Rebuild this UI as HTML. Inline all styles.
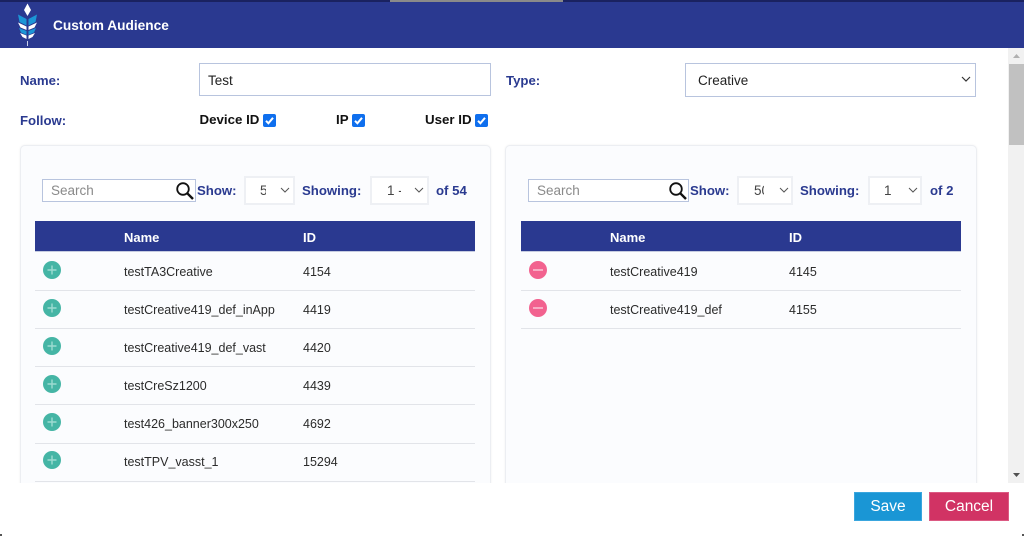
<!DOCTYPE html>
<html>
<head>
<meta charset="utf-8">
<style>
html,body{margin:0;padding:0;width:1024px;height:536px;overflow:hidden;background:#fff;font-family:"Liberation Sans",Arial,sans-serif;font-size:14px;color:#222}
.a{position:absolute;white-space:nowrap}
.lbl{color:#2a3a90;font-weight:bold;font-size:13.2px;line-height:16px}
.blk{color:#111;font-weight:bold;font-size:13.300px;line-height:16px}
.panel{position:absolute;top:145px;width:471px;height:345px;background:#fbfcfe;border:1px solid #eceef2;border-radius:5px;box-sizing:border-box;box-shadow:0 0 2px rgba(0,0,0,.06)}
.box{position:absolute;box-sizing:border-box;background:#fff}
.sel{border:2px solid #eef0f4;background:#fff}
.th{position:absolute;top:221px;height:31px;background:#2a3990;border-bottom:1px solid #c5cbe0;box-sizing:border-box}
.thx{color:#fff;font-weight:bold;font-size:13px;line-height:16px}
.td{font-size:12.5px;line-height:16px;color:#2b2b2b}
.sep{position:absolute;height:1px;background:#e2e4e9}
.ph{color:#8a8a8a;font-size:13.5px;line-height:16px}
</style>
</head>
<body>
<!-- top strip -->
<div class="a" style="left:0;top:0;width:1024px;height:2px;background:#1a2260"></div>
<div class="a" style="left:390px;top:0;width:173px;height:2px;background:#8a8a8a"></div>
<!-- header -->
<div class="a" style="left:0;top:2px;width:1024px;height:46px;background:#2a3990"></div>
<svg class="a" style="left:14px;top:2px" width="28" height="46" viewBox="0 0 28 46">
<polygon points="13.500,1.500 17,8 13.500,14 10,8" fill="#fff"/>
<polygon points="4,12.500 12.500,17 12.500,23.500 5.500,20" fill="#1c96d6"/>
<polygon points="23,12.500 14.500,17 14.500,23.500 21.500,20" fill="#1c96d6"/>
<polygon points="4,20.500 12.500,24.500 12.500,28 6.500,25.500" fill="#fff"/>
<polygon points="23,20.500 14.500,24.500 14.500,28 20.500,25.500" fill="#fff"/>
<polygon points="5,26 12.500,29 12.500,33 7,30.500" fill="#1c96d6"/>
<polygon points="22,26 14.500,29 14.500,33 20,30.500" fill="#1c96d6"/>
<polygon points="6,31 12.500,33.500 12.500,37 8.500,35" fill="#fff"/>
<polygon points="21,31 14.500,33.500 14.500,37 18.500,35" fill="#fff"/>
<rect x="13" y="39" width="1" height="5" fill="#c9d0ea"/>
</svg>
<div class="a" style="left:53px;top:17px;color:#fff;font-weight:bold;font-size:13.700px;line-height:17px">Custom Audience</div>

<!-- form row 1 -->
<div class="a lbl" style="left:20px;top:73px">Name:</div>
<div class="box" style="left:199px;top:63px;width:292px;height:33px;border:1px solid #b8c4de"></div>
<div class="a" style="left:208px;top:73px;font-size:13.500px;line-height:16px;color:#222">Test</div>
<div class="a lbl" style="left:506px;top:73px">Type:</div>
<div class="box" style="left:685px;top:63px;width:291px;height:34px;border:1px solid #b8c4de"></div>
<div class="a" style="left:698px;top:73px;font-size:13.500px;line-height:16px;color:#222">Creative</div>
<svg class="a" style="left:961px;top:76px" width="10" height="7" viewBox="0 0 10 7"><path d="M1 1l4 4 4-4" fill="none" stroke="#333" stroke-width="1.200"/></svg>

<!-- form row 2 -->
<div class="a lbl" style="left:20px;top:113px">Follow:</div>
<div class="a blk" style="left:199.500px;top:112px">Device ID</div>
<div class="a blk" style="left:336px;top:112px">IP</div>
<div class="a blk" style="left:425px;top:112px">User ID</div>
<svg class="a" style="left:263px;top:114px" width="13" height="13" viewBox="0 0 13 13"><rect width="13" height="13" rx="2" fill="#0f6fee"/><path d="M3 6.800l2.400 2.500L10 3.800" fill="none" stroke="#fff" stroke-width="2"/></svg>
<svg class="a" style="left:352px;top:114px" width="13" height="13" viewBox="0 0 13 13"><rect width="13" height="13" rx="2" fill="#0f6fee"/><path d="M3 6.800l2.400 2.500L10 3.800" fill="none" stroke="#fff" stroke-width="2"/></svg>
<svg class="a" style="left:475px;top:114px" width="13" height="13" viewBox="0 0 13 13"><rect width="13" height="13" rx="2" fill="#0f6fee"/><path d="M3 6.800l2.400 2.500L10 3.800" fill="none" stroke="#fff" stroke-width="2"/></svg>

<!-- panels -->
<div class="panel" style="left:20px"></div>
<div class="panel" style="left:505px;width:472px"></div>

<!-- left toolbar -->
<div class="box" style="left:42px;top:179px;width:154px;height:23px;border:1px solid #b8c4de"></div>
<div class="a ph" style="left:51px;top:183px">Search</div>
<svg class="a" style="left:175px;top:181px" width="20" height="20" viewBox="0 0 20 20"><circle cx="8" cy="8" r="5.800" fill="none" stroke="#111" stroke-width="1.800"/><path d="M12.300 12.300L18 18" stroke="#111" stroke-width="2.400"/></svg>
<div class="a lbl" style="left:197px;top:183px">Show:</div>
<div class="box sel" style="left:244px;top:176px;width:51px;height:29px"></div>
<div class="a" style="left:260px;top:183px;width:6px;overflow:hidden;font-size:13.500px;line-height:16px;color:#444">5</div>
<svg class="a" style="left:280px;top:187px" width="10" height="7" viewBox="0 0 10 7"><path d="M1 1l4 4 4-4" fill="none" stroke="#555" stroke-width="1"/></svg>
<div class="a lbl" style="left:302px;top:183px">Showing:</div>
<div class="box sel" style="left:370px;top:176px;width:59px;height:29px"></div>
<div class="a" style="left:387px;top:183px;width:14px;overflow:hidden;font-size:13.500px;line-height:16px;color:#444">1 -</div>
<svg class="a" style="left:414px;top:187px" width="10" height="7" viewBox="0 0 10 7"><path d="M1 1l4 4 4-4" fill="none" stroke="#555" stroke-width="1"/></svg>
<div class="a lbl" style="left:436px;top:183px">of 54</div>

<!-- left table -->
<div class="th" style="left:35px;width:440px"></div>
<div class="a thx" style="left:124px;top:230px">Name</div>
<div class="a thx" style="left:303px;top:230px">ID</div>

<div class="a td" style="left:124px;top:264px">testTA3Creative</div><div class="a td" style="left:303px;top:264px">4154</div>
<div class="sep" style="left:35px;top:290px;width:440px"></div>
<div class="a td" style="left:124px;top:302px">testCreative419_def_inApp</div><div class="a td" style="left:303px;top:302px">4419</div>
<div class="sep" style="left:35px;top:328px;width:440px"></div>
<div class="a td" style="left:124px;top:340px">testCreative419_def_vast</div><div class="a td" style="left:303px;top:340px">4420</div>
<div class="sep" style="left:35px;top:366px;width:440px"></div>
<div class="a td" style="left:124px;top:378px">testCreSz1200</div><div class="a td" style="left:303px;top:378px">4439</div>
<div class="sep" style="left:35px;top:404px;width:440px"></div>
<div class="a td" style="left:124px;top:416px">test426_banner300x250</div><div class="a td" style="left:303px;top:416px">4692</div>
<div class="sep" style="left:35px;top:443px;width:440px"></div>
<div class="a td" style="left:124px;top:454px">testTPV_vasst_1</div><div class="a td" style="left:303px;top:454px">15294</div>
<div class="sep" style="left:35px;top:481px;width:440px"></div>

<svg class="a" style="left:43px;top:261px" width="18" height="18" viewBox="0 0 18 18"><circle cx="9" cy="9" r="9" fill="#45b5a5"/><path d="M9 4.500v9M4.500 9h9" stroke="#9ddbd1" stroke-width="1.400"/></svg>
<svg class="a" style="left:43px;top:299px" width="18" height="18" viewBox="0 0 18 18"><circle cx="9" cy="9" r="9" fill="#45b5a5"/><path d="M9 4.500v9M4.500 9h9" stroke="#9ddbd1" stroke-width="1.400"/></svg>
<svg class="a" style="left:43px;top:337px" width="18" height="18" viewBox="0 0 18 18"><circle cx="9" cy="9" r="9" fill="#45b5a5"/><path d="M9 4.500v9M4.500 9h9" stroke="#9ddbd1" stroke-width="1.400"/></svg>
<svg class="a" style="left:43px;top:375px" width="18" height="18" viewBox="0 0 18 18"><circle cx="9" cy="9" r="9" fill="#45b5a5"/><path d="M9 4.500v9M4.500 9h9" stroke="#9ddbd1" stroke-width="1.400"/></svg>
<svg class="a" style="left:43px;top:413px" width="18" height="18" viewBox="0 0 18 18"><circle cx="9" cy="9" r="9" fill="#45b5a5"/><path d="M9 4.500v9M4.500 9h9" stroke="#9ddbd1" stroke-width="1.400"/></svg>
<svg class="a" style="left:43px;top:451px" width="18" height="18" viewBox="0 0 18 18"><circle cx="9" cy="9" r="9" fill="#45b5a5"/><path d="M9 4.500v9M4.500 9h9" stroke="#9ddbd1" stroke-width="1.400"/></svg>

<!-- right toolbar -->
<div class="box" style="left:528px;top:179px;width:161px;height:23px;border:1px solid #b8c4de"></div>
<div class="a ph" style="left:537px;top:183px">Search</div>
<svg class="a" style="left:668px;top:181px" width="20" height="20" viewBox="0 0 20 20"><circle cx="8" cy="8" r="5.800" fill="none" stroke="#111" stroke-width="1.800"/><path d="M12.300 12.300L18 18" stroke="#111" stroke-width="2.400"/></svg>
<div class="a lbl" style="left:690px;top:183px">Show:</div>
<div class="box sel" style="left:737px;top:176px;width:56px;height:29px"></div>
<div class="a" style="left:754px;top:183px;width:10px;overflow:hidden;font-size:13.500px;line-height:16px;color:#444">50</div>
<svg class="a" style="left:779px;top:187px" width="10" height="7" viewBox="0 0 10 7"><path d="M1 1l4 4 4-4" fill="none" stroke="#555" stroke-width="1"/></svg>
<div class="a lbl" style="left:800px;top:183px">Showing:</div>
<div class="box sel" style="left:868px;top:176px;width:54px;height:29px"></div>
<div class="a" style="left:884px;top:183px;font-size:13.500px;line-height:16px;color:#444">1</div>
<svg class="a" style="left:908px;top:187px" width="10" height="7" viewBox="0 0 10 7"><path d="M1 1l4 4 4-4" fill="none" stroke="#555" stroke-width="1"/></svg>
<div class="a lbl" style="left:930px;top:183px">of 2</div>

<!-- right table -->
<div class="th" style="left:521px;width:440px"></div>
<div class="a thx" style="left:610px;top:230px">Name</div>
<div class="a thx" style="left:789px;top:230px">ID</div>
<div class="a td" style="left:610px;top:264px">testCreative419</div><div class="a td" style="left:789px;top:264px">4145</div>
<div class="sep" style="left:521px;top:290px;width:440px"></div>
<div class="a td" style="left:610px;top:302px">testCreative419_def</div><div class="a td" style="left:789px;top:302px">4155</div>
<div class="sep" style="left:521px;top:328px;width:440px"></div>
<svg class="a" style="left:529px;top:261px" width="18" height="18" viewBox="0 0 18 18"><circle cx="9" cy="9" r="9" fill="#f2628f"/><path d="M4 9h10" stroke="#f9c0d2" stroke-width="1.600"/></svg>
<svg class="a" style="left:529px;top:299px" width="18" height="18" viewBox="0 0 18 18"><circle cx="9" cy="9" r="9" fill="#f2628f"/><path d="M4 9h10" stroke="#f9c0d2" stroke-width="1.600"/></svg>

<!-- scrollbar -->
<div class="a" style="left:1008px;top:48px;width:16px;height:435px;background:#f1f1f1"></div>
<div class="a" style="left:1009px;top:64px;width:15px;height:81px;background:#c1c1c1"></div>
<svg class="a" style="left:1012px;top:53px" width="9" height="6" viewBox="0 0 9 6"><polygon points="4.500,1 8,5 1,5" fill="#b0b0b0"/></svg>
<svg class="a" style="left:1012px;top:472px" width="9" height="6" viewBox="0 0 9 6"><polygon points="1,1 8,1 4.500,5" fill="#505050"/></svg>

<!-- footer -->
<div class="a" style="left:0;top:483px;width:1024px;height:53px;background:#fff"></div>
<div class="a" style="left:854px;top:492px;width:68px;height:29px;background:#1a96d5;border:1px solid #3aa6de;box-sizing:border-box;color:#fff;font-size:15.500px;line-height:27px;text-align:center">Save</div>
<div class="a" style="left:929px;top:492px;width:80px;height:29px;background:#d13364;border:1px solid #dc5a83;box-sizing:border-box;color:#fff;font-size:15.500px;line-height:27px;text-align:center">Cancel</div>
<div class="a" style="left:0;top:534px;width:2px;height:2px;background:#555"></div>
<div class="a" style="left:1022px;top:534px;width:2px;height:2px;background:#555"></div>
</body>
</html>
